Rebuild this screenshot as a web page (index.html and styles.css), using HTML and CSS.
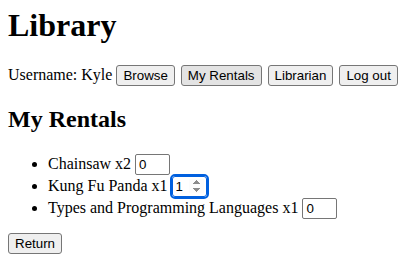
FILE: index.html
```html
<!DOCTYPE html>
<html lang="en">
<head>
  <meta charset="UTF-8">
  <meta name="viewport" content="width=device-width, initial-scale=1.0">
  <title>Library</title>
  <link rel="stylesheet" href="styles.css">
</head>
<body>
  <h1>Library</h1>

  <!-- Navigation -->
  <div class="nav">
    Username: Kyle
    <button>Browse</button>
    <button class="current">My Rentals</button>
    <button>Librarian</button>
    <button>Log out</button>
  </div>

  <h2>My Rentals</h2>
  <ul class="rentals">
    <li>Chainsaw x2 <input type="number" class="qty" value="0" min="0" max="2"></li>
    <li>Kung Fu Panda x1 <input type="number" class="qty focused" value="1" min="0" max="1"></li>
    <li>Types and Programming Languages x1 <input type="number" class="qty" value="0" min="0" max="1"></li>
  </ul>

  <button>Return</button>
</body>
</html>
```

FILE: styles.css
```css
body {
  font-family: "Liberation Serif", "Times New Roman", serif;
  margin: 7px 8px 8px;
}
h1 {
  margin-top: 0;
}
button, input {
  font-family: "Liberation Sans", Arial, sans-serif;
  font-size: 13.33px;
}
button {
  padding: 2px 6px;
  background-color: #efefef;
  border: 1px solid #767676;
  border-radius: 3px;
  color: black;
}
.nav button + button {
  margin-left: 2px;
}
button.current {
  background-color: #e3e3e3;
}
.qty {
  width: 28px;
  padding: 2px 2px 2px 3px;
  border: 1px solid #767676;
  border-radius: 2px;
}
.qty.focused {
  outline: 2px solid #0060df;
  outline-offset: 0;
  border-color: #0060df;
  border-radius: 3px;
}
.qty.focused::-webkit-inner-spin-button {
  opacity: 1;
}
.rentals {
  margin: 0 0 14px;
}
li {
  line-height: 22px;
}
```
